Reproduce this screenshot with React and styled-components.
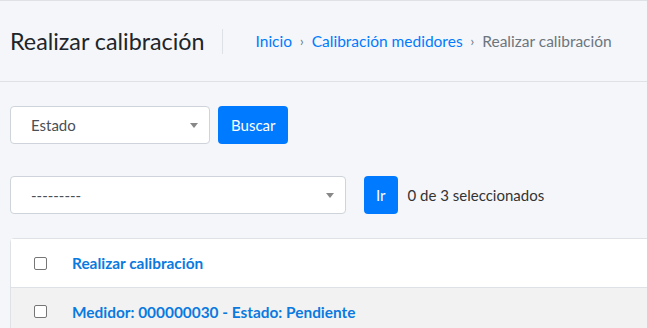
import styled, { createGlobalStyle } from "styled-components";

/**
 * Global
 */
const GlobalStyle = createGlobalStyle`
  html, body {
    margin: 0;
    padding: 0;
    background: #f4f6f9;
    overflow: hidden;
  }
  body {
    font-family: "Lato", "Liberation Sans", sans-serif;
    color: #212529;
  }
  * {
    box-sizing: border-box;
  }
`;

/**
 * Styles
 */
const Page = styled.div`
  width: 647px;
  height: 328px;
  border-top: 1px solid #dee2e6;
`;

const Header = styled.header`
  height: 81px;
  display: flex;
  align-items: center;
  padding: 0 10px;
  border-bottom: 1px solid #dee2e6;
`;

const Title = styled.h1`
  margin: 0;
  font-size: 23.3px;
  font-weight: 400;
  padding-right: 17px;
  margin-right: 33px;
  line-height: 28px;
  border-right: 1px solid #dee2e6;
  height: 25px;
  display: flex;
  align-items: center;
`;

const Crumbs = styled.nav`
  display: flex;
  align-items: center;
  font-size: 15.5px;
  color: #6c757d;
`;

const Crumb = styled.a`
  color: ${({ active }) => (active ? "#6c757d" : "#007bff")};
  text-decoration: none;
`;

const Sep = styled.span`
  color: #6c757d;
  font-size: 13px;
  padding: 0 8px;
`;

const Content = styled.main`
  padding: 24px 0 0 10px;
`;

const Row = styled.div`
  display: flex;
  align-items: center;
  gap: ${({ gap }) => gap}px;
  margin-bottom: ${({ mb }) => mb}px;
`;

const Select = styled.div`
  width: ${({ w }) => w}px;
  height: 38px;
  background: #fff;
  border: 1px solid #ced4da;
  border-radius: 4px;
  display: flex;
  align-items: center;
  justify-content: space-between;
  padding: 0 11px 0 20px;
  font-size: 15px;
  color: #495057;
`;

const Caret = styled.span`
  width: 0;
  height: 0;
  border-left: 4px solid transparent;
  border-right: 4px solid transparent;
  border-top: 5px solid #888;
`;

const Button = styled.button`
  height: 38px;
  padding: 0 ${({ px }) => px}px;
  margin-left: ${({ ml }) => ml || 0}px;
  background: #007bff;
  color: #fff;
  border: none;
  border-radius: 4px;
  font-family: inherit;
  font-size: 15px;
`;

const Counter = styled.span`
  font-size: 15px;
  color: #333;
`;

const Table = styled.div`
  width: calc(100% + 10px);
  background: #fff;
  border: 1px solid #dee2e6;
  border-radius: 4px 0 0 0;
`;

const TRow = styled.div`
  height: 48px;
  display: flex;
  align-items: center;
  padding-left: 23px;
  gap: 25px;
  background: ${({ striped }) => (striped ? "#f2f2f2" : "#fff")};
  border-top: ${({ striped }) => (striped ? "1px solid #dee2e6" : "none")};
`;

const Check = styled.span`
  width: 13px;
  height: 13px;
  border: 1px solid #767676;
  border-radius: 2px;
  background: #fff;
`;

const TLink = styled.a`
  color: #0a7ae0;
  font-weight: 700;
  font-size: 15.4px;
  text-decoration: none;
`;

const App = () => {
  return (
    <Page>
      <GlobalStyle />
      <Header>
        <Title>Realizar calibración</Title>
        <Crumbs>
          <Crumb href="#">Inicio</Crumb>
          <Sep>›</Sep>
          <Crumb href="#">Calibración medidores</Crumb>
          <Sep>›</Sep>
          <Crumb active>Realizar calibración</Crumb>
        </Crumbs>
      </Header>

      <Content>
        <Row gap={8} mb={32}>
          <Select w={200}>
            Estado
            <Caret />
          </Select>
          <Button px={13}>Buscar</Button>
        </Row>

        <Row gap={10} mb={24}>
          <Select w={336}>
            ---------
            <Caret />
          </Select>
          <Button px={12} ml={8}>Ir</Button>
          <Counter>0 de 3 seleccionados</Counter>
        </Row>

        <Table>
          <TRow>
            <Check />
            <TLink href="#">Realizar calibración</TLink>
          </TRow>
          <TRow striped>
            <Check />
            <TLink href="#">Medidor: 000000030 - Estado: Pendiente</TLink>
          </TRow>
        </Table>
      </Content>
    </Page>
  );
};

export default App;
